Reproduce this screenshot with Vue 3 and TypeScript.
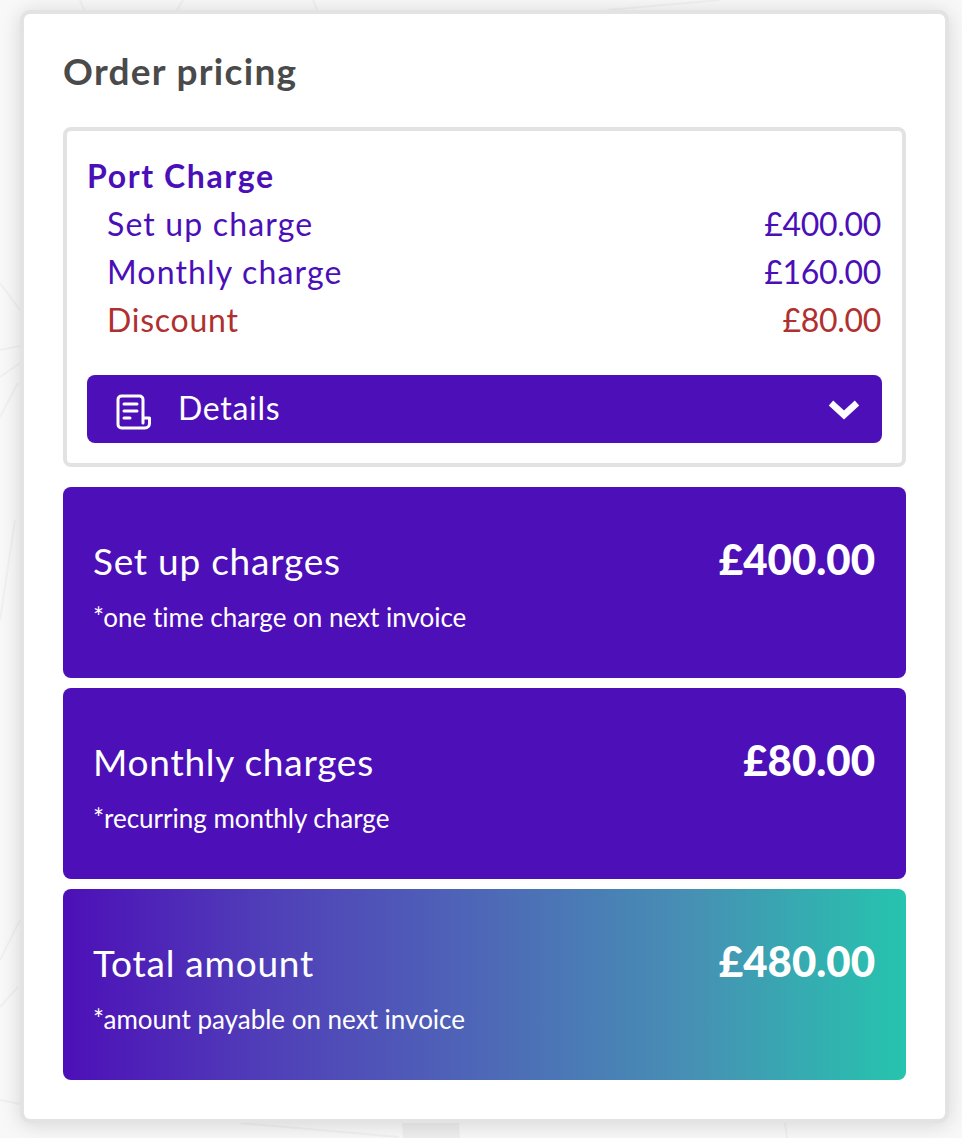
<script setup lang="ts">
interface Line { label: string; amount: string; tone?: string }
interface Panel { title: string; amount: string; note: string; tone: string }
const lines: Line[] = [
  { label: 'Set up charge', amount: '£400.00' },
  { label: 'Monthly charge', amount: '£160.00' },
  { label: 'Discount', amount: '£80.00', tone: 'red' },
]
const panels: Panel[] = [
  { title: 'Set up charges', amount: '£400.00', note: '*one time charge on next invoice', tone: 'solid' },
  { title: 'Monthly charges', amount: '£80.00', note: '*recurring monthly charge', tone: 'solid' },
  { title: 'Total amount', amount: '£480.00', note: '*amount payable on next invoice', tone: 'gradient' },
]
</script>

<template>
  <div class="page">
    <svg class="bg" width="962" height="1138" viewBox="0 0 962 1138" fill="none" stroke="#f0f0f0" stroke-width="2">
      <path d="M0 283 L20 310" />
      <path d="M0 350 L20 346" />
      <path d="M0 377 L20 363" />
      <path d="M0 417 L18 383" />
      <path d="M0 620 L15 520" />
      <path d="M0 960 L20 920" />
      <path d="M0 1007 L18 987" />
      <path d="M0 1100 L20 1104" />
      <path d="M240 1123 L399 1137" />
      <path d="M785 1123 L787 1138" />
      <path d="M80 0 L84 10" />
      <path d="M183 0 L177 10" />
      <path d="M313 0 L317 10" />
      <path d="M607 10 L720 0" />
      <path d="M402 1122 H459 L460 1138 H403 Z" fill="#eeeeee" stroke="none" />
    </svg>
    <section class="card">
      <h1 class="title">Order pricing</h1>
      <div class="box">
        <h2 class="box-title">Port Charge</h2>
        <div v-for="l in lines" :key="l.label" class="line" :class="l.tone">
          <span>{{ l.label }}</span>
          <span class="line-amount">{{ l.amount }}</span>
        </div>
        <div class="details">
          <svg class="doc" width="36" height="36" viewBox="0 0 36 36" fill="none" stroke="#fff" stroke-width="3" stroke-linecap="round" stroke-linejoin="round">
            <path d="M27 29 V5.5 a3.5 3.5 0 0 0 -3.5 -3.5 H5.5 a3.5 3.5 0 0 0 -3.5 3.5 V30.5 a3.5 3.5 0 0 0 3.5 3.5 H29 a4.5 4.5 0 0 0 4.5 -4.5 V24 H27" />
            <path d="M8 10 H21 M8 17 H21 M8 24 H14" />
          </svg>
          <span class="details-label">Details</span>
          <svg class="chev" width="32" height="22" viewBox="0 0 32 22" fill="none" stroke="#fff" stroke-width="6.5">
            <path d="M3 5 L16 17 L29 5" />
          </svg>
        </div>
      </div>
      <div v-for="p in panels" :key="p.title" class="panel" :class="p.tone">
        <div class="panel-top">
          <span class="panel-title">{{ p.title }}</span>
          <span class="panel-amount">{{ p.amount }}</span>
        </div>
        <div class="panel-note">{{ p.note }}</div>
      </div>
    </section>
  </div>
</template>

<style>
html, body { margin: 0; background: #f8f8f8; }
</style>

<style scoped>
.page {
  position: relative;
  box-sizing: border-box;
  width: 962px;
  height: 1138px;
  padding: 10px 13px 0 20px;
  overflow: hidden;
  background: #f8f8f8;
  font-family: Lato, "Noto Sans", sans-serif;
  font-variant-ligatures: none;
}
.bg { position: absolute; left: 0; top: 0; }
.card {
  position: relative;
  box-sizing: border-box;
  width: 929px;
  height: 1113px;
  padding: 34px 39px 0 39px;
  background: #fff;
  border: 4px solid #e3e3e3;
  border-radius: 10px;
  box-shadow: 0 2px 20px rgba(0, 0, 0, .14);
}
.title {
  margin: 0 0 33px;
  height: 46px;
  line-height: 46px;
  font-size: 37px;
  font-weight: 700;
  letter-spacing: 1.3px;
  color: #4a4a4a;
}
.box {
  box-sizing: border-box;
  height: 340px;
  padding: 21px 20px 0;
  border: 4px solid #e2e2e2;
  border-radius: 8px;
  color: #4b0fb8;
  margin-bottom: 20px;
}
.box-title {
  margin: 0;
  height: 48px;
  line-height: 48px;
  font-size: 32px;
  font-weight: 700;
  letter-spacing: 1.6px;
}
.line {
  display: flex;
  justify-content: space-between;
  height: 48px;
  line-height: 48px;
  padding-left: 20px;
  font-size: 32px;
  letter-spacing: 1.15px;
}
.line-amount { letter-spacing: -.3px; margin-right: 1px; }
.line.red { color: #b03030; letter-spacing: .75px; }
.details {
  display: flex;
  align-items: center;
  height: 68px;
  margin-top: 31px;
  padding: 0 22px 0 29px;
  background: #4d0fb8;
  border-radius: 8px;
  color: #fff;
  font-size: 32px;
  letter-spacing: .7px;
}
.doc { flex: none; margin: 5px 26px 0 0; }
.details-label { flex: 1; padding-bottom: 3px; }
.chev { flex: none; }
.panel {
  box-sizing: border-box;
  height: 191px;
  margin-bottom: 10px;
  padding: 48px 31px 0 30px;
  border-radius: 8px;
  color: #fff;
}
.panel.solid { background: #4d0fb8; }
.panel.gradient {
  background: linear-gradient(90deg, #4d0fb8 0%, #5040b8 25%, #4e68b7 50%, #4691b4 75%, #26c4ae 100%);
}
.panel-top {
  display: flex;
  justify-content: space-between;
  align-items: center;
  height: 50px;
}
.panel-title { font-size: 37px; letter-spacing: .75px; }
.panel-amount { font-size: 42px; font-weight: 900; margin-top: -3px; }
.panel-note {
  margin-top: 16px;
  height: 32px;
  line-height: 32px;
  font-size: 26px;
}
</style>
